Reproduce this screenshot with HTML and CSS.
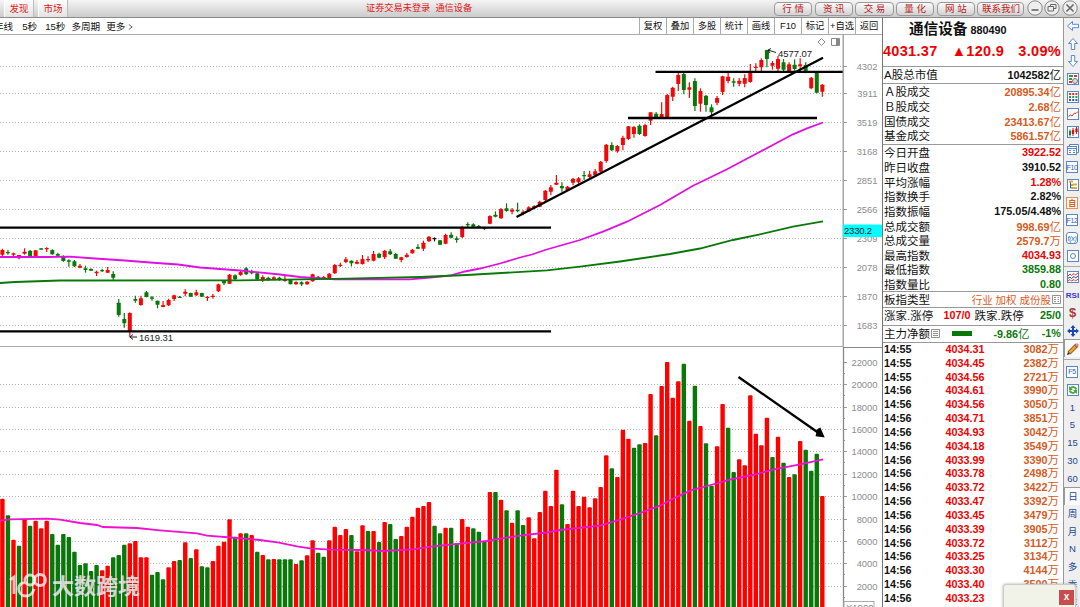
FILE: index.html
```html
<!DOCTYPE html>
<html lang="zh-CN">
    <head>
        <meta charset="UTF-8">
        <meta name="viewport" content="width=device-width, initial-scale=1.0">
        <title>通信设备 880490</title>
        <link rel="stylesheet" href="styles.css">
    </head>
    <body>
        <header class="topbar">
            <div class="tab first">发现</div>
            <div class="tab">市场</div>
            <div class="notice">证券交易未登录&nbsp; 通信设备</div>
            <div class="top-btns">
                <span class="pill">行 情</span>
                <span class="pill">资 讯</span>
                <span class="pill">交 易</span>
                <span class="pill">量 化</span>
                <span class="pill">网 站</span>
                <span class="pill wide">联系我们</span>
            </div>
            <div class="win-btns">
                <svg viewBox="0 0 16 16"><circle cx="8" cy="8" r="7.2"/><path d="M4.5 10h7"/></svg>
                <svg viewBox="0 0 16 16"><circle cx="8" cy="8" r="7.2"/><path class="thin" d="M6.5 6.500V4.500h5.500v4h-2M4 6.500h5.500v4.500H4z"/></svg>
                <svg viewBox="0 0 16 16"><circle cx="8" cy="8" r="7.2"/><path d="M4.500 4.500l7 7M11.500 4.500l-7 7"/></svg>
            </div>
        </header>

        <div class="main">
            <div class="charts">
                <div class="subbar">
                    <div class="periods">
                        <span class="cut">年线</span><span>5秒</span><span>15秒</span><span>多周期</span><span>更多</span>
                        <svg class="chev" viewBox="0 0 6 8"><path d="M1 1l4 3-4 3"/></svg>
                    </div>
                    <div class="tools">
                        <span>复权</span><span>叠加</span><span>多股</span><span>统计</span><span>画线</span><span>F10</span><span>标记</span><span>+自选</span><span>返回</span>
                    </div>
                </div>
                <svg class="kline" id="kline" viewBox="0 35 882 312"></svg>
                <svg class="volume" id="volume" viewBox="0 347 882 260"></svg>
            </div>

            <aside class="quote">
                <div class="head">
                    <div class="name">通信设备 <b>880490</b></div>
                    <div class="price"><span>4031.37</span><span>▲120.9</span><span>3.09%</span></div>
                </div>
                <div class="group cap">
                    <div class="row"><span>A股总市值</span><b>1042582<i>亿</i></b></div>
                </div>
                <div class="group turnover">
                    <div class="row"><span>Ａ股成交</span><b class="orange">20895.34<i>亿</i></b></div>
                    <div class="row"><span>Ｂ股成交</span><b class="orange">2.68<i>亿</i></b></div>
                    <div class="row"><span>国债成交</span><b class="orange">23413.67<i>亿</i></b></div>
                    <div class="row"><span>基金成交</span><b class="orange">5861.57<i>亿</i></b></div>
                </div>
                <div class="group stats">
                    <div class="row"><span>今日开盘</span><b class="red">3922.52</b></div>
                    <div class="row"><span>昨日收盘</span><b>3910.52</b></div>
                    <div class="row"><span>平均涨幅</span><b class="red">1.28%</b></div>
                    <div class="row"><span>指数换手</span><b>2.82%</b></div>
                    <div class="row"><span>指数振幅</span><b>175.05/4.48%</b></div>
                    <div class="row"><span>总成交额</span><b class="orange">998.69<i>亿</i></b></div>
                    <div class="row"><span>总成交量</span><b class="orange">2579.7<i>万</i></b></div>
                    <div class="row"><span>最高指数</span><b class="red">4034.93</b></div>
                    <div class="row"><span>最低指数</span><b class="green">3859.88</b></div>
                    <div class="row"><span>指数量比</span><b class="green">0.80</b></div>
                </div>
                <div class="group types">
                    <div class="row">
                        <span>板指类型</span>
                        <span class="links">行业 加权 成份股<svg viewBox="0 0 9 9"><path d="M.5.500h8v8h-8zM2 2.500h2M5.500 2.500h1.500M2 4.500h2M5.500 4.500h1.500M2 6.500h2M5.500 6.500h1.500"/></svg></span>
                    </div>
                </div>
                <div class="group updown">
                    <div class="row">
                        <span>涨家.涨停</span><b class="red up">107/0</b><span class="down">跌家.跌停</span><b class="green">25/0</b>
                    </div>
                </div>
                <div class="group flow">
                    <div class="row">
                        <span class="net">主力净额<svg viewBox="0 0 9 9"><path d="M.5.500h8v8h-8zM2 2.500h5M2 4.500h5M2 6.500h5"/></svg></span>
                        <span class="flow-bar"></span>
                        <b class="green amount">-9.86<i>亿</i></b><b class="green">-1%</b>
                    </div>
                </div>
                <div class="ticks" id="ticks"></div>
            </aside>

            <nav class="rail">
                <span><svg viewBox="0 0 14 14"><path class="arrow" d="M1.500 7l5-4.500v2.800h6v3.400h-6v2.800z"/></svg></span>
                <span><svg viewBox="0 0 14 14"><path class="arrow" d="M7 1.500l4.500 5H8.700v6H5.300v-6H2.500z"/></svg></span>
                <span><svg viewBox="0 0 14 14"><path class="arrow" d="M7 12.500l4.500-5H8.700v-6H5.300v6H2.500z"/></svg></span>
                <span><svg viewBox="0 0 14 14"><rect class="box" x="1.500" y="1.500" width="11" height="11"/><path stroke="#2a9a4a" stroke-width="2" d="M3 4h4M3 7h3"/><path stroke="#d33" stroke-width="2" d="M8 4h3M3 10h3"/><circle cx="9" cy="9" r="2.500" fill="#ddd" stroke="#777"/></svg></span>
                <span><svg viewBox="0 0 14 14"><rect class="box" x="1.500" y="1.500" width="11" height="11"/><path stroke="#d33" stroke-width="2" stroke-dasharray="2 1.200" d="M3 4h9"/><path stroke="#2a9a4a" stroke-width="2" stroke-dasharray="2 1.200" d="M3 7h9"/><path stroke="#3355cc" stroke-width="2" stroke-dasharray="2 1.200" d="M3 10h9"/></svg></span>
                <span><svg viewBox="0 0 14 14"><rect class="box" x="1.500" y="1.500" width="11" height="11"/><path stroke="#d22" d="M2.500 9.500l2-1.500 1.500 1 2.500-3 1.500.5 2-2"/></svg></span>
                <span><svg viewBox="0 0 14 14"><rect class="box" x="1.500" y="1.500" width="11" height="11"/><path stroke="#0a8a3a" d="M4 4.500v7"/><path stroke="#d11" d="M7 3v8M10.500 2v7"/><path stroke="#0a8a3a" stroke-width="2" d="M4 6v4"/><path stroke="#d11" stroke-width="2.400" d="M7 5v4M10.500 3.500v3.500"/></svg></span>
                <span><svg viewBox="0 0 14 14"><path class="box" d="M3.500 3.500v-2h9v8h-2"/><rect class="box" x="1.500" y="3.500" width="9" height="8"/><path class="blue" d="M2 5.500h8M3 7.500h2M7 7.500h2M3 9.500h2M7 9.500h2"/></svg></span>
                <span class="word">F10</span>
                <span><svg viewBox="0 0 14 14"><rect class="box" x="1.500" y="1.500" width="11" height="11"/><path stroke="#556" d="M4.500 4v6h3M4.500 7h3"/><path stroke="#e0b020" stroke-width="2" d="M3 3.500h4M7 6.500h4M7 10h4"/></svg></span>
                <span class="word self">自</span>
                <span class="word">F12</span>
                <span class="word fx">f(x)</span>
                <span><svg viewBox="0 0 14 14"><rect class="box" x="1.500" y="1.500" width="11" height="11"/><circle class="blue" cx="7" cy="7" r="2.500"/></svg></span>
                <hr>
                <span><svg viewBox="0 0 14 14"><rect class="box" x="1.500" y="1.500" width="11" height="11"/><path stroke="#d33" d="M2 6l2-2 1.500 1.500L8 3.500 9.500 5 12 3"/><path stroke="#33c" d="M2 8.500l2-1.500 1.500 1.500L8 6.500 9.500 8 12 6"/><path stroke="#d33" d="M2 11l2-1.500L5.500 11 8 9.500l1.500 1.500L12 9"/></svg></span>
                <span class="rsi">RSI</span>
                <span class="dollar">$</span>
                <span><svg viewBox="0 0 14 14"><path fill="#1747b5" d="M7 1l2.500 3H8v2h2V4.500L13 7l-3 2.500V8H8v2h1.500L7 13l-2.500-3H6V8H4v1.500L1 7l3-2.500V6h2V4H4.500z"/></svg></span>
                <span class="on"><svg viewBox="0 0 14 14"><path stroke="#7a4a10" stroke-width="4" d="M3 11l8-8"/><path stroke="#f0a030" stroke-width="2.600" d="M3.500 10.500l6-6"/><path stroke="#e58a8a" stroke-width="3" d="M10 4l2-2"/><path fill="#222" d="M1 13l1-3 2 2z"/></svg></span>
                <hr>
                <span class="word">F5</span>
                <span><svg viewBox="0 0 14 14"><rect class="box" x="1.500" y="1.500" width="11" height="11"/><path stroke="#4aa83a" stroke-width="2" d="M10.500 6.500C9 3.500 6 3.500 4.500 5.500M3.500 7.500c1.500 3 4.500 3 6 1"/><path fill="#4aa83a" d="M3 3v4h4zM11 11V7H7z"/></svg></span>
                <span>1</span>
                <span>5</span>
                <span>15</span>
                <span>30</span>
                <span>60</span>
                <span class="on cn">日</span>
                <span class="cn">周</span>
                <span class="cn">月</span>
                <span>N</span>
                <span class="cn">多</span>
                <span class="cn">季</span>
                <span class="cn">年</span>
            </nav>
        </div>

        <div class="popup"><span>x</span></div>

        <div class="watermark">
            <svg viewBox="0 0 40 28"><path d="M1 7l4-3v17M16 10c-8-2-9 13 1 13 5 0 7-3 8-7"/><circle cx="21" cy="7" r="5"/><circle cx="31" cy="7" r="5.500"/></svg>
            <span>大数跨境</span>
        </div>

        <script src="chart.js"></script>
    </body>
</html>
```
FILE: styles.css
```css
* {
    box-sizing: border-box;
}
body {
    margin: 0;
    width: 1080px;
    height: 607px;
    overflow: hidden;
    background-color: #ffffff;
    font-family: "Liberation Sans", "Noto Sans CJK SC", sans-serif;
    font-size: 10px;
    color: #111;
    position: relative;
}
svg {
    display: block;
    fill: none;
}
.red { color: #f00000; }
.green { color: #087808; }
.orange { color: #d85a1c; }

/* top bar */
.topbar {
    display: flex;
    height: 18px;
    background: linear-gradient(#f4f4f4, #cccccc);
    border-bottom: 1px solid #8a8a8a;
    color: #e02020;
    line-height: 17px;
}
.tab {
    width: 30px;
    margin-left: 4px;
    text-align: center;
    font-size: 9.500px;
    background: linear-gradient(#fff, #e2e2e2);
    border-left: 1px solid #fff;
    border-right: 1px solid #bbb;
}
.notice {
    margin-left: 298px;
    width: 408px;
    font-size: 9.200px;
    white-space: nowrap;
}
.top-btns {
    display: flex;
    gap: 2.500px;
    padding-top: 2px;
}
.pill {
    width: 38.200px;
    height: 13.500px;
    line-height: 11.500px;
    text-align: center;
    font-size: 9.500px;
    color: #b81c1c;
    background: linear-gradient(#fafafa, #d2d2d2);
    border: 1px solid #999;
    border-radius: 4px;
    white-space: nowrap;
}
.pill.wide {
    width: 47px;
}
.win-btns {
    display: flex;
    gap: 1.500px;
    margin-left: 2.500px;
}
.win-btns svg {
    width: 16px;
    height: 16px;
    stroke: #666;
    stroke-width: 1.600;
}
.win-btns circle {
    fill: #eee;
    stroke: #888;
    stroke-width: 1;
}
.win-btns .thin {
    stroke-width: 1;
}

.main {
    display: flex;
    height: 589px;
}
.charts {
    width: 882px;
    flex: none;
}
.subbar {
    height: 17px;
    display: flex;
    justify-content: space-between;
    border-bottom: 1px solid #aaa;
    line-height: 17px;
}
.periods {
    display: flex;
    font-size: 9.600px;
    overflow: hidden;
}
.periods span {
    margin-right: 8px;
    white-space: nowrap;
}
.periods .cut {
    margin-left: -6px;
    margin-right: 9px;
}
.periods span:nth-child(3) {
    margin-right: 6px;
}
.periods span:nth-child(4) {
    margin-right: 6px;
}
.periods span:nth-child(5) {
    margin-right: 3px;
}
.chev {
    width: 5px;
    height: 8px;
    margin-top: 5px;
    stroke: #444;
}
.tools {
    display: flex;
}
.tools span {
    width: 27px;
    border-left: 1px solid #aaa;
    text-align: center;
    font-size: 9.300px;
    white-space: nowrap;
}
.kline {
    width: 882px;
    height: 312px;
}
.volume {
    width: 882px;
    height: 260px;
}
.axis-text {
    fill: #8c8c8c;
    font-size: 9.400px;
    text-anchor: end;
}
.mark-text {
    fill: #222;
    font-size: 9.500px;
}

/* quote panel */
.quote {
    width: 182px;
    flex: none;
    border-left: 1px solid #777;
    border-right: 1px solid #999;
    padding-right: 2px;
    overflow: hidden;
}
.head {
    height: 48px;
}
.name {
    height: 23px;
    line-height: 22px;
    padding-left: 26px;
    font-size: 14.600px;
    font-weight: bold;
    white-space: nowrap;
}
.name b {
    font-size: 10.800px;
    margin-left: -1px;
}
.price {
    display: flex;
    justify-content: space-between;
    line-height: 21px;
    font-size: 14.500px;
    font-weight: bold;
    letter-spacing: 0.300px;
    color: #f00000;
}
.group {
    border-top: 1px solid #999;
    margin-right: -2px;
    padding: 0 2px 0 1px;
}
.row {
    display: flex;
    align-items: center;
    justify-content: space-between;
    height: 14.650px;
    font-size: 11.500px;
    white-space: nowrap;
}
.row b {
    font-size: 10.800px;
}
.row i, .ticks i {
    font-style: normal;
    font-weight: normal;
    font-size: 11.500px;
}
.cap { height: 17px; }
.turnover { height: 61px; }
.stats { height: 147px; }
.types { height: 16px; }
.updown { height: 18px; }
.flow { height: 17px; }
.types .row {
    height: 14px;
}
.updown .row, .flow .row {
    height: 14px;
}
.links {
    display: flex;
    align-items: center;
    font-size: 10.500px;
    color: #d85a1c;
}
.links svg, .net svg {
    width: 9px;
    height: 9px;
    margin-left: 1px;
    stroke: #777;
    stroke-width: 0.800;
}
.net {
    display: flex;
    align-items: center;
}
.up {
    margin-left: 2px;
}
.down {
    margin-left: -4px;
}
.updown .green {
    margin-left: 8px;
}
.flow-bar {
    width: 20px;
    height: 5px;
    background-color: #087808;
}
.amount {
    margin-left: 9px;
}
.ticks {
    border-top: 1px solid #999;
    margin-right: -2px;
    padding: 0 4px 0 1px;
}
.tick {
    display: flex;
    height: 13.830px;
    line-height: 13px;
    font-size: 10.800px;
    font-weight: bold;
}
.tick span {
    width: 61.500px;
}
.tick .vol {
    flex: 1;
    text-align: right;
}

/* icon rail */
.rail {
    flex: 1;
    display: flex;
    flex-direction: column;
    background-color: #efefef;
    color: #24479a;
    font-size: 9.500px;
    overflow: hidden;
}
.rail span {
    display: flex;
    flex: none;
    align-items: center;
    justify-content: center;
    height: 17.700px;
    width: 17px;
}
.rail span:first-child {
    margin-top: -1px;
}
.rail svg {
    width: 14px;
    height: 14px;
}
.rail hr {
    width: 100%;
    flex: none;
    margin: 1px 0 2px;
    border: 0;
    border-top: 1px solid #aaa;
}
.rail .arrow {
    fill: #fff;
    stroke: #5b8bd8;
}
.rail .box {
    fill: #fff;
    stroke: #5b87c8;
}
.rail .blue {
    stroke: #5b87c8;
}
.rail .word {
    width: 12px;
    height: 12px;
    margin: 2.850px 2px;
    border: 1px solid #5b87c8;
    background-color: #fff;
    color: #2a5bc8;
    font-size: 7px;
    letter-spacing: -0.300px;
}
.rail .self {
    color: #e0601a;
    border-color: #e59050;
    font-size: 8px;
    font-weight: bold;
}
.rail .fx {
    font-style: italic;
    border-radius: 3px;
    color: #1a6a9a;
}
.rail .rsi {
    font-size: 8px;
    font-weight: bold;
    color: #3838d8;
}
.rail .dollar {
    font-size: 13px;
    font-weight: bold;
    color: #a83a3a;
}
.rail .on {
    background-color: #fafafa;
    border-left: 1px solid #999;
    border-top: 1px solid #999;
}
.rail .on + hr {
    margin: 2px 0 3px;
}

.popup {
    position: absolute;
    left: 1003px;
    top: 584px;
    width: 73px;
    height: 30px;
    background-color: #f1f3e8;
    border: 1px solid #ccc;
    border-radius: 3px;
    box-shadow: 0 0 3px #aaa;
}
.popup span {
    display: block;
    width: 15px;
    height: 15px;
    margin: 5px 0 0 55px;
    line-height: 13px;
    text-align: center;
    color: #fff;
    font-weight: bold;
    background-color: #c84c4c;
}
.watermark {
    position: absolute;
    left: 9px;
    top: 573px;
    display: flex;
    align-items: center;
    color: rgba(255, 255, 255, 0.75);
    font-size: 22px;
    font-weight: 600;
    line-height: 28px;
    text-shadow: 0 0 2px rgba(80, 80, 80, 0.6);
}
.watermark svg {
    width: 40px;
    height: 28px;
    margin-right: 3px;
    stroke: rgba(255, 255, 255, 0.75);
    stroke-width: 2.800;
}
```
FILE: chart.js
```javascript
const RED = "#f00808";
const GREEN = "#087808";
const STEP = 5.54;
const FIRST = 2.4;

// candles: colour, high, body top, body bottom, low, in 1/3 px below the section's base line
const candles = [
    { base: 220, rows: `R 86 90 104 108|G 90 96 98 104|R 98 100 103 108|R 105 105 115 118|R 85 95 101 104|G 90 92 108 110|R 90 91 109 110|G 85 85 88 88|R 82 84 88 96|G 88 90 103 104|G 98 102 107 108|G 106 108 123 125|G 118 121 125 140|G 120 124 139 141|R 132 137 143 145|G 137 145 150 158|G 145 147 152 153|R 152 155 160 168|G 146 150 154 156|R 141 150 158 159|G 154 162 173 180|G 237 248 285 290|G 279 297 310 323|R 277 279 333 352|G 227 237 242 248|R 227 235 255 257|G 213 217 231 232|G 228 232 236 242|G 242 242 254 265|R 243 255 261 262|R 236 240 256 258|R 224 226 237 243|G 228 230 233 234|R 208 215 221 229|G 218 219 230 231|R 209 217 226 228|G 218 219 230 231|R 228 230 234 243|R 222 227 231 236|R 191 193 214 216|G 181 183 190 195|R 162 164 191 192|G 163 166 178 180|R 153 156 165 167|G 141 145 163 165|G 149 154 160 163|G 157 160 178 181|R 166 171 181 186|G 170 173 180 183|R 169 172 178 181|G 170 173 180 182` },
    { base: 180, rows: `R 288 298 303 305|G 298 300 313 313|R 304 306 313 314|G 304 307 313 318|R 303 305 313 314|R 281 283 304 305|G 288 290 296 298|R 288 291 296 298|R 279 281 294 296|R 252 255 280 282|R 248 254 258 261|R 231 238 246 250|G 241 242 250 259|R 240 245 251 253|R 225 237 252 254|R 229 237 241 246|R 213 222 242 244|G 218 221 233 235|R 210 212 232 237|G 207 214 223 225|G 219 222 236 237|R 230 232 240 247|R 219 224 231 233|R 207 209 220 221|G 193 201 206 207|R 182 188 206 213|R 168 170 184 186|K 172 174 178 184|G 180 181 194 195|R 161 165 191 193|G 157 164 173 175|G 169 175 180 188|R 137 141 171 174|G 127 132 135 141|G 130 133 140 142|G 135 138 142 144|R 140 142 146 150|R 106 108 131 133|G 94 104 110 112|R 84 87 115 117|G 70 85 93 95|R 84 89 95 103|G 68 90 94 97|R 91 95 102 106|R 79 82 94 95|R 76 78 84 86|R 62 65 80 82|R 30 32 60 68|R 15 22 35 46|R -15 8 14 15` },
    { base: 40, rows: `G 427 438 445 455|R 438 440 450 452|R 414 416 428 436|R 411 415 427 432|G 393 405 408 420|R 392 403 411 415|R 387 394 406 409|R 363 365 395 397|R 312 314 363 368|G 307 315 331 333|R 315 318 334 338|R 287 293 315 331|R 258 259 297 300|R 258 261 282 293|G 253 257 282 285|R 251 255 288 290|R 217 217 242 255|G 216 221 235 237|R 187 222 234 236|R 162 165 231 233|R 140 143 170 183|R 97 105 132 153|G 97 102 150 163|R 127 142 149 174|G 115 123 198 213|R 145 153 191 215|G 165 167 195 215|G 193 202 217 228|R 168 174 188 196|R 107 109 156 165|R 96 110 123 130|G 115 124 127 140|R 114 122 131 139|R 103 114 131 142|R 72 95 126 128|R 70 80 84 97|R 55 60 82 97|G 29 30 57 82|R 63 69 77 89|R 48 57 86 97|G 57 67 89 94|R 67 73 93 97|G 58 74 87 92|R 55 73 78 92|G 67 75 97 100|R 111 113 145 148|G 97 99 158 160|R 132 134 155 170` }
];

// volume bars: colour + top, same units
const volumes = [
    { base: 480, rows: "R56 G106 R179 G197 R118 G137 R122 R145 R122 G162 G194 G162 G171 G215 G255 G250 G273 G255 R271 R257 G232 G225 G194 R190 R183 R232 R232 G284 G276 G298 R262 R243 G240 R187 G234 R208 G259 G262 R243 R197 R185 R118 G170 R160 G160 R165 G215 R225 G238 R237 G238" },
    { base: 460, rows: "G298 G298 R312 G301 R286 R241 G278 G290 R241 R200 R225 R207 G225 R274 R196 G213 R213 G246 R186 G192 G237 R228 R200 R170 R143 R138 R126 G197 G220 R203 G203 G250 R177 R200 G205 G215 G245 R96 G96 R119 G151 R188 G151 G195 R172 R235 R156 R92 R138 R29" },
    { base: 345, rows: "G478 R537 R437 R483 R455 R487 R460 R426 R331 G370 R396 R254 R281 G308 G298 R294 R147 G271 R123 R51 R158 R109 G56 R227 G122 R243 G295 G422 R304 R177 G248 G381 R343 R361 R151 R266 R301 R218 G336 R275 G353 R396 G388 R288 G314 G377 G326 R453" }
];

const priceAxis = [[4302, 66.500], [3911, 93.500], [3519, 122.500], [3168, 151.500], [2851, 180.500], [2566, 209.500], [2309, 238.500], [2078, 267.500], [1870, 296.500], [1683, 325.500]];

function color(c) {
    return c === "R" ? RED : c === "G" ? GREEN : "#111";
}
function line(x1, y1, x2, y2, stroke, width, extra = "") {
    return `<line x1="${x1}" y1="${y1}" x2="${x2}" y2="${y2}" stroke="${stroke}" stroke-width="${width}" ${extra}/>`;
}
function poly(points, stroke) {
    return `<polyline points="${points}" stroke="${stroke}" stroke-width="1.8"/>`;
}
function grid(y) {
    return line(0, y, 842, y, "#b4b4b4", 1, 'stroke-dasharray="1 2"') + line(843, y, 847, y, "#999", 1);
}
function label(x, y, text) {
    return `<text class="axis-text" x="${x}" y="${y + 3.5}">${text}</text>`;
}

function drawKline() {
    let out = "";
    priceAxis.forEach(([value, y]) => {
        out += grid(y) + label(877.5, y, value);
    });
    let i = 0;
    candles.forEach(part => part.rows.split("|").forEach(row => {
        const [c, ...v] = row.split(" ");
        const [high, top, bottom, low] = v.map(n => part.base + n / 3);
        const x = FIRST + STEP * i++;
        out += line(x, high, x, low, color(c), 1.2);
        out += `<rect x="${x - 2}" y="${top}" width="4" height="${Math.max(bottom - top, 1.3)}" rx="0.5" fill="${color(c)}"/>`;
    }));
    // moving averages
    out += poly("0,257 47,257 70,256.7 95,258.5 125,260.5 150,262.5 178,264.5 200,267.5 240,270.5 280,274.5 300,277 335,279.3 410,279.3 430,277.7 450,275.5 465,271.5 480,268.5 500,263.5 520,257.5 532,254.500 545,250 580,240 603,231.700 627,221.700 660,205 693,185.700 727,169.300 760,151.700 793,134.300 807,128.300 823,122.500", "#e010e0");
    out += poly("0,283 15,282 60,280.500 240,280.300 347,278.700 420,277 467,275 513,272.300 547,270.300 580,266.700 620,261.500 670,254 700,248.500 733,240 760,234.300 793,226.700 823,221.300", GREEN);
    // drawn lines
    out += line(0, 227.700, 551, 227.700, "#000", 2.3);
    out += line(0, 331.300, 551, 331.300, "#000", 2.3);
    out += line(655.500, 71.800, 843, 71.800, "#000", 2.3);
    out += line(628, 118, 817, 118, "#000", 2.3);
    out += line(516.500, 217, 823, 57.800, "#000", 2.3);
    out += '<path d="M137 337h-7m3-2.500l-3 2.500 3 2.500M776 52.500l-8-2.500m3-1.500l-3 1.500 2 3" stroke="#222"/>';
    out += '<text class="mark-text" x="139" y="341" textLength="34">1619.31</text>';
    out += '<text class="mark-text" x="778" y="57" textLength="34">4577.07</text>';
    out += '<path d="M821.500 38.500l3.500 3.500-3.500 3.500-3.500-3.500zM831.500 38.500h8v7h-8z" stroke="#888"/><rect x="836" y="39" width="3" height="6" fill="#888"/>';
    // scale
    out += line(843.200, 35, 843.200, 347, "#999", 1.3);
    out += '<rect x="843" y="224.500" width="39" height="12.500" fill="#00ffff"/><text x="844" y="234" font-size="9.500" fill="#123" textLength="28">2330.2</text>';
    out += line(0, 346.500, 843, 346.500, "#aaa", 1);
    document.getElementById("kline").innerHTML = out;
}

function drawVolume() {
    let out = "";
    for (let n = 0; n < 11; n++) {
        const y = Math.round(362 + n * 22.36) + 0.5;
        out += (n ? grid(y) : line(843, y, 847, y, "#999", 1)) + label(877.5, y, 22000 - n * 2000);
        out += line(843, y + 11, 845, y + 11, "#999", 1);
    }
    let i = 0;
    volumes.forEach(part => part.rows.split(" ").forEach(bar => {
        const x = FIRST + STEP * i++;
        const y = part.base + Number(bar.slice(1)) / 3;
        const c = bar[0] === "R" ? "#ff0000" : GREEN;
        out += `<rect x="${x - 2.2}" y="${y}" width="4.4" height="${620 - y}" rx="1" fill="${c}"/>`;
    }));
    out += poly("0,520.7 10,519.300 47,518.700 60,519.700 80,523 97,525 103,527 137,528 160,530.300 197,533.300 207,535.700 237,538 260,540 279,542.700 297,546.300 310,548.300 330,549.700 363,550 383,551 413,549.300 433,546.300 460,543.700 487,541 500,538.700 520,535.700 547,532.500 560,530 600,525.700 620,519.700 640,513 660,505.700 673,498.700 690,490.700 707,486 730,479.700 753,475 773,469.700 800,464.300 823,459.300", "#f010d0");
    out += line(738.500, 377, 818, 432.500, "#000", 2.3) + '<path d="M823.500 436.500l-7-1 .5-2.500 1-3.500 2-1z" fill="#000" stroke="#000" stroke-width="1.500"/>';
    out += line(843.500, 347.500, 882, 347.500, "#888", 1) + line(843.500, 347, 843.500, 607, "#888", 1.3);
    out += '<rect x="844" y="601.500" width="30" height="12" fill="#fff" stroke="#aaa"/><text x="846" y="611" font-size="9.500" fill="#888">X1000</text>';
    document.getElementById("volume").innerHTML = out;
}

const ticks = [
    ["14:55", "4034.31", 3082], ["14:55", "4034.45", 2382], ["14:55", "4034.56", 2721],
    ["14:56", "4034.61", 3990], ["14:56", "4034.56", 3050], ["14:56", "4034.71", 3851],
    ["14:56", "4034.93", 3042], ["14:56", "4034.18", 3549], ["14:56", "4033.99", 3390],
    ["14:56", "4033.78", 2498], ["14:56", "4033.72", 3422], ["14:56", "4033.47", 3392],
    ["14:56", "4033.45", 3479], ["14:56", "4033.39", 3905], ["14:56", "4033.72", 3112],
    ["14:56", "4033.25", 3134], ["14:56", "4033.30", 4144], ["14:56", "4033.40", 3500],
    ["14:56", "4033.23", ""]
];

document.getElementById("ticks").innerHTML = ticks.map(([time, price, vol]) =>
    `<div class="tick"><span>${time}</span><span class="red">${price}</span><span class="vol orange">${vol}${vol ? "<i>万</i>" : ""}</span></div>`
).join("");
drawKline();
drawVolume();
```
